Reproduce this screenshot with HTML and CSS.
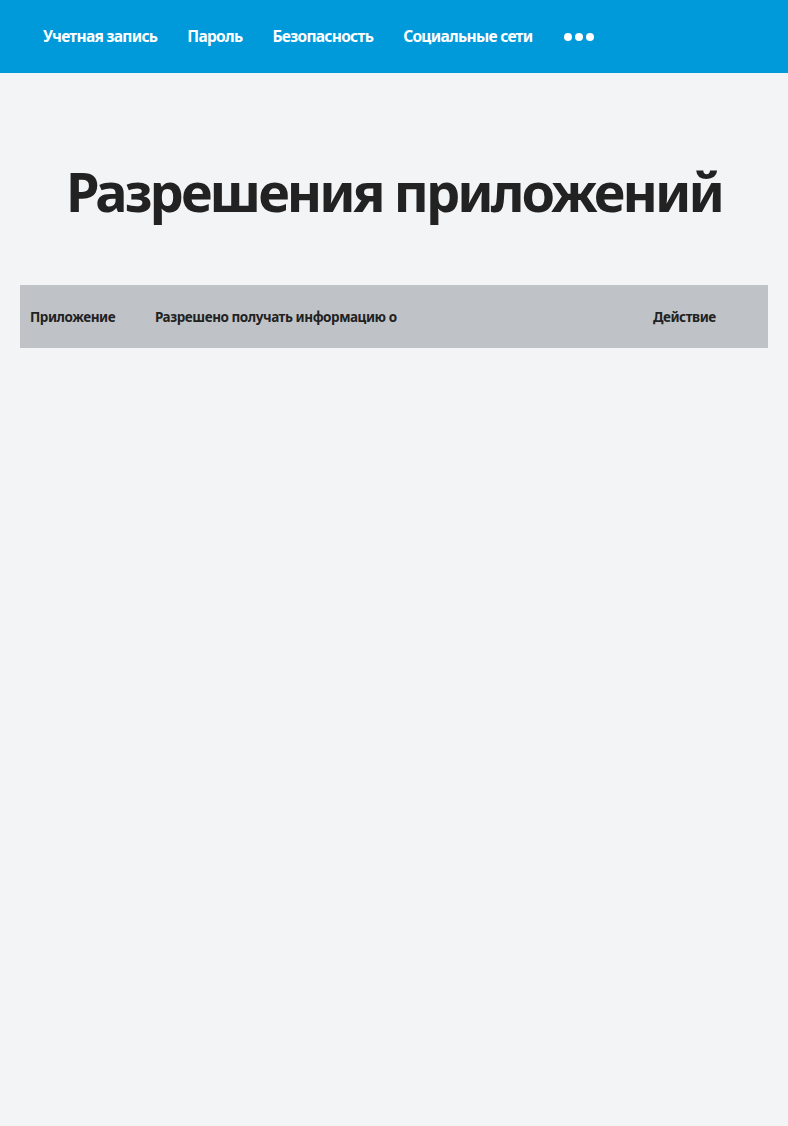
FILE: index.html
```html
<!DOCTYPE html>
<html lang="ru">
<head>
<meta charset="utf-8">
<link rel="stylesheet" href="styles.css">
</head>
<body>
<nav class="topnav">
  <a class="nav-item">Учетная запись</a>
  <a class="nav-item">Пароль</a>
  <a class="nav-item">Безопасность</a>
  <a class="nav-item">Социальные сети</a>
  <a class="nav-more"><span></span><span></span><span></span></a>
</nav>
<main class="content">
  <h1 class="title">Разрешения приложений</h1>
  <table class="perm-table">
    <colgroup>
      <col class="col-app">
      <col class="col-perm">
      <col class="col-action">
    </colgroup>
    <thead>
      <tr>
        <th>Приложение</th>
        <th>Разрешено получать информацию о</th>
        <th>Действие</th>
      </tr>
    </thead>
  </table>
</main>
</body>
</html>
```
FILE: styles.css
```css
html, body {
  margin: 0;
  padding: 0;
  background: #f3f4f6;
  font-family: "Noto Sans", "Open Sans", sans-serif;
  color: #222;
}
.topnav {
  height: 73px;
  background: #009adb;
  display: flex;
  align-items: center;
  padding-left: 43px;
  gap: 30px;
}
.nav-item {
  color: #fff;
  font-weight: 700;
  font-size: 15.5px;
  letter-spacing: -0.7px;
  line-height: 1;
}
.nav-more {
  display: flex;
  gap: 3px;
  margin-left: 2px;
}
.nav-more span {
  width: 8px;
  height: 8px;
  border-radius: 50%;
  background: #fff;
}
.content {
  padding: 0 20px;
}
.title {
  margin: 0;
  padding: 82px 0 58px;
  text-align: center;
  font-size: 54px;
  font-weight: 700;
  letter-spacing: -2.9px;
  line-height: 72px;
  white-space: nowrap;
  color: #222;
}
.perm-table {
  width: 100%;
  table-layout: fixed;
  border-collapse: collapse;
  background: #bfc3c7;
}
.perm-table th {
  height: 63px;
  padding: 0 10px;
  text-align: left;
  font-size: 13.5px;
  font-weight: 700;
  letter-spacing: -0.45px;
  color: #222;
  white-space: nowrap;
}
.col-app { width: 125px; }
.col-perm { width: 498px; }
.col-action { width: 125px; }
```
